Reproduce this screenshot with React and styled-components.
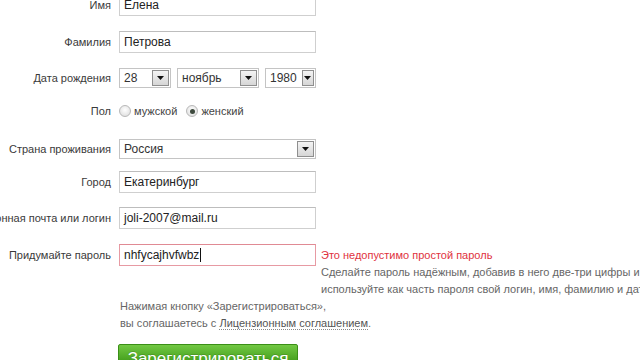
import React from "react";
import styled, { createGlobalStyle } from "styled-components";

const GlobalStyle = createGlobalStyle`
  html, body {
    margin: 0;
    padding: 0;
    background: #ffffff;
    overflow: hidden;
  }
  body {
    font-family: "Liberation Sans", Arial, sans-serif;
    color: #333;
  }
`;

const Page = styled.div`
  width: 640px;
  height: 360px;
  overflow: hidden;
  background: #fff;
`;

const Form = styled.div`
  display: flex;
  flex-direction: column;
  margin-top: -6px;
`;

const Row = styled.div`
  display: flex;
  align-items: ${(props) => (props.top ? "flex-start" : "center")};
  min-height: 22px;
  margin-bottom: ${(props) => props.gap || 0}px;
`;

const Label = styled.div`
  width: 111px;
  flex: none;
  display: flex;
  justify-content: flex-end;
  white-space: nowrap;
  font-size: 11px;
  color: #3a3a3a;
  margin-right: 8px;
  line-height: 22px;
`;

const Input = styled.div`
  box-sizing: border-box;
  flex: none;
  width: 197px;
  height: 22px;
  border: 1px solid ${(props) => (props.error ? "#e79aa3" : "#cfcfcf")};
  border-top-color: ${(props) => (props.error ? "#e08a94" : "#bdbdbd")};
  padding: 0 4px;
  font-size: 12px;
  line-height: 20px;
  color: #222;
  background: #fff;
  white-space: nowrap;
  display: flex;
  align-items: center;
`;

const Caret = styled.span`
  display: inline-block;
  width: 1px;
  height: 14px;
  background: #111;
  margin-left: 1px;
`;

const SelectGroup = styled.div`
  display: flex;
  gap: 6px;
`;

const Select = styled.div`
  box-sizing: border-box;
  flex: none;
  width: ${(props) => props.width}px;
  height: 20px;
  border: 1px solid #c4c4c4;
  display: flex;
  align-items: stretch;
  background: #fff;
`;

const SelectValue = styled.div`
  flex: 1;
  padding: 0 4px;
  font-size: 12px;
  line-height: 18px;
  color: #333;
  white-space: nowrap;
`;

const ArrowBox = styled.div`
  box-sizing: border-box;
  width: 17px;
  margin: 1px;
  border: 1px solid #8f8f8f;
  background: linear-gradient(#f4f4f4, #d6d6d6);
  display: flex;
  align-items: center;
  justify-content: center;
`;

const RadioGroup = styled.div`
  display: flex;
  align-items: center;
  font-size: 11px;
  color: #444;
`;

const RadioItem = styled.label`
  display: flex;
  align-items: center;
  margin-right: 9px;
`;

const RadioCircle = styled.span`
  box-sizing: border-box;
  width: 12px;
  height: 12px;
  border-radius: 50%;
  border: 1px solid #b8b8b8;
  background: radial-gradient(circle at 50% 40%, #ffffff, #d9d9d9);
  margin-right: 3px;
  display: flex;
  align-items: center;
  justify-content: center;
  &::after {
    content: "";
    width: 5px;
    height: 5px;
    border-radius: 50%;
    background: ${(props) => (props.checked ? "#3d4a3d" : "transparent")};
  }
`;

const Hint = styled.div`
  margin-left: 5px;
  margin-top: 3px;
  font-size: 11px;
  line-height: 17px;
  color: #666;
  white-space: nowrap;
`;

const HintError = styled.div`
  color: #e0323e;
`;

const Agreement = styled.div`
  margin-left: 120px;
  font-size: 11px;
  line-height: 17px;
  color: #666;
  white-space: nowrap;
`;

const Link = styled.span`
  color: #555;
  border-bottom: 1px dotted #888;
`;

const Submit = styled.button`
  margin: 12px 0 0 118px;
  width: 180px;
  height: 30px;
  border: 1px solid #3b8f17;
  border-radius: 2px;
  background: linear-gradient(#72c843, #47a21f 55%, #3c9516);
  color: #fff;
  font-family: "Liberation Sans", Arial, sans-serif;
  font-size: 17px;
  line-height: 28px;
  padding: 0;
  text-shadow: 0 -1px 0 rgba(0, 0, 0, 0.15);
  align-self: flex-start;
`;

const Arrow = () => (
  <ArrowBox>
    <svg width="7" height="4" viewBox="0 0 7 4">
      <path d="M0 0h7L3.5 4z" fill="#111" />
    </svg>
  </ArrowBox>
);

const Dropdown = ({ width, value }) => (
  <Select width={width}>
    <SelectValue>{value}</SelectValue>
    <Arrow />
  </Select>
);

const App = () => (
  <Page>
    <GlobalStyle />
    <Form>
      <Row gap={15}>
        <Label>Имя</Label>
        <Input>Елена</Input>
      </Row>
      <Row gap={14}>
        <Label>Фамилия</Label>
        <Input>Петрова</Input>
      </Row>
      <Row gap={11}>
        <Label>Дата рождения</Label>
        <SelectGroup>
          <Dropdown width={52} value="28" />
          <Dropdown width={82} value="ноябрь" />
          <Dropdown width={51} value="1980" />
        </SelectGroup>
      </Row>
      <Row gap={16}>
        <Label>Пол</Label>
        <RadioGroup>
          <RadioItem>
            <RadioCircle />
            мужской
          </RadioItem>
          <RadioItem>
            <RadioCircle checked />
            женский
          </RadioItem>
        </RadioGroup>
      </Row>
      <Row gap={11}>
        <Label>Страна проживания</Label>
        <Dropdown width={197} value="Россия" />
      </Row>
      <Row gap={14}>
        <Label>Город</Label>
        <Input>Екатеринбург</Input>
      </Row>
      <Row gap={15}>
        <Label>Электронная почта или логин</Label>
        <Input>joli-2007@mail.ru</Input>
      </Row>
      <Row top>
        <Label>Придумайте пароль</Label>
        <Input error>
          nhfycajhvfwbz
          <Caret />
        </Input>
        <Hint>
          <HintError>Это недопустимо простой пароль</HintError>
          <div>Сделайте пароль надёжным, добавив в него две-три цифры и</div>
          <div>используйте как часть пароля свой логин, имя, фамилию и дату рождения.</div>
        </Hint>
      </Row>
      <Agreement>
        <div>Нажимая кнопку «Зарегистрироваться»,</div>
        <div>
          вы соглашаетесь с <Link>Лицензионным соглашением</Link>.
        </div>
      </Agreement>
      <Submit>Зарегистрироваться</Submit>
    </Form>
  </Page>
);

export default App;
